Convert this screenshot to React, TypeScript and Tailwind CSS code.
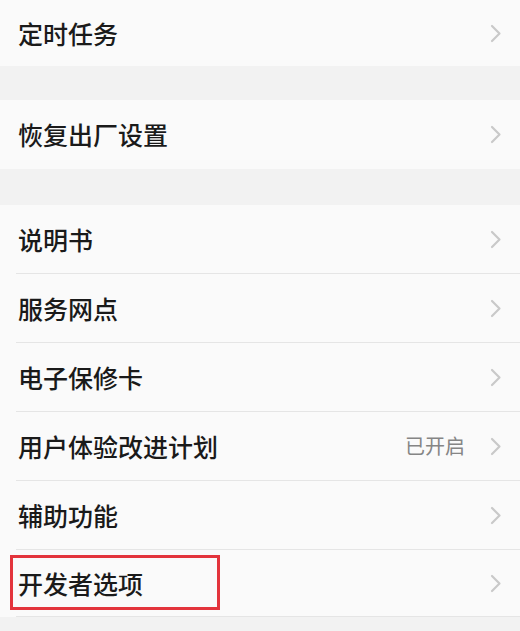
import React from "react";

const Chevron = () => (
  <svg width="12" height="19" viewBox="0 0 12 19" fill="none" className="shrink-0">
    <path d="M2 2 L9.5 9.5 L2 17" stroke="#c9c9c9" strokeWidth="2.2" strokeLinecap="round" strokeLinejoin="round" />
  </svg>
);

const Row = ({ label, value, h, children }: { label: string; value?: string; h: string; children?: React.ReactNode }) => (
  <div className={`relative flex items-center justify-between pl-[18px] pr-[18px] bg-[#fafafa] ${h}`}>
    <span className="text-[25px] leading-none font-medium text-[#1a1a1a]">{label}</span>
    <div className="flex items-center gap-[25px]">
      {value && <span className="text-[20px] leading-none text-[#858585]">{value}</span>}
      <Chevron />
    </div>
    {children}
  </div>
);

const Divider = () => (
  <div className="bg-[#fafafa]">
    <div className="ml-[16px] h-px bg-[#e5e5e5]" />
  </div>
);

export default function App() {
  return (
    <div
      className="w-[520px] h-[631px] overflow-hidden bg-[#f2f2f2]"
      style={{ fontFamily: '"Noto Sans CJK SC", "Noto Sans", sans-serif' }}
    >
      <Row label="定时任务" h="h-[66px]" />
      <div className="h-[34px] bg-[#f2f2f2]" />
      <Row label="恢复出厂设置" h="h-[69px]" />
      <div className="h-[36px] bg-[#f2f2f2]" />
      <Row label="说明书" h="h-[68px]" />
      <Divider />
      <Row label="服务网点" h="h-[68px]" />
      <Divider />
      <Row label="电子保修卡" h="h-[68px]" />
      <Divider />
      <Row label="用户体验改进计划" value="已开启" h="h-[68px]" />
      <Divider />
      <Row label="辅助功能" h="h-[68px]" />
      <Divider />
      <Row label="开发者选项" h="h-[66px]">
        <div className="absolute left-[10px] top-[5px] w-[210px] h-[55px] border-[3px] border-[#e3343c]" />
      </Row>
      <Divider />
    </div>
  );
}
